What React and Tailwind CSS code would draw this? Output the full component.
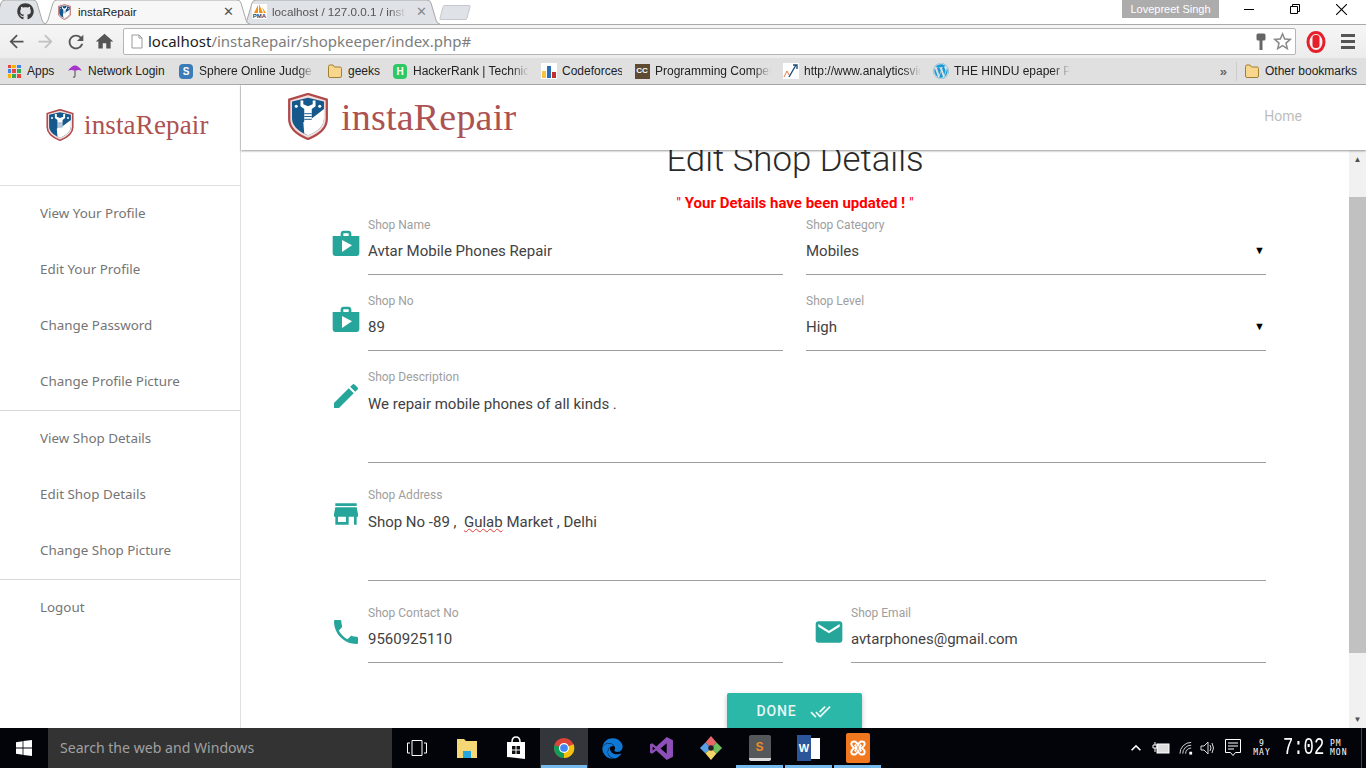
import { FaGithub, FaWordpress, FaEdge } from 'react-icons/fa';
import { MdShop, MdEdit, MdStore, MdPhone, MdEmail, MdDoneAll, MdArrowBack, MdArrowForward, MdRefresh, MdHome, MdStarBorder, MdKeyboardArrowUp } from 'react-icons/md';

const uiFont = "font-['Liberation_Sans',sans-serif]";

function Shield({ className }) {
  return (
    <svg viewBox="0 0 42 50" className={className}>
      <path d="M21 1 L41 7 L41 28 C41 38 31 45 21 49 C11 45 1 38 1 28 L1 7 Z" fill="#f3dcdc" stroke="#b04a4a" strokeWidth="2.4" />
      <path d="M21 5 L38 9 L38 27 C38 36 29 42 21 45 C13 42 4 36 4 27 L4 9 Z" fill="#14588c" />
      <path d="M17 43 L16 31 L25 27 L38 17 L38 27 C38 36 29 42 21 45 Z" fill="#fff" />
      <path d="M13 8 L13 14 L17 17 L17 33 L25 33 L25 17 L29 14 L29 8 L26 8 L26 12 L21 14 L16 12 L16 8 Z" fill="#fff" />
      <path d="M17 22 H25 M17 25 H25 M17 28 H25" stroke="#14588c" strokeWidth="1" />
      <circle cx="8.5" cy="14" r="1.6" fill="#fff" />
      <circle cx="33.5" cy="14" r="1.6" fill="#fff" />
    </svg>
  );
}

function Logo({ shield, text, gap }) {
  return (
    <div className={`flex items-center ${gap}`}>
      <Shield className={shield} />
      <span className={`font-['Liberation_Serif',serif] text-[#ac5252] ${text}`}>instaRepair</span>
    </div>
  );
}

function Tab({ w, className, active, children }) {
  return (
    <div className={`relative flex items-center h-[25px] shrink-0 ${className} ${active ? 'z-10' : ''}`}>
      <svg viewBox={`0 0 ${w} 25`} className="absolute inset-0 w-full h-full">
        <path
          d={`M0 25 Q3 25 4 21 L9 4 Q10 1 13 1 L${w - 13} 1 Q${w - 10} 1 ${w - 9} 4 L${w - 4} 21 Q${w - 3} 25 ${w} 25`}
          fill={active ? '#f7f7f7' : '#dfe2e7'}
          stroke="#a8a8a8"
          strokeWidth="1"
        />
      </svg>
      <div className="relative flex items-center w-full">{children}</div>
    </div>
  );
}

function Bookmark({ icon, label, width, fade }) {
  return (
    <div className="flex items-center gap-[5px] shrink-0">
      <span className="w-4 h-4 flex items-center justify-center shrink-0">{icon}</span>
      <span
        className={`whitespace-nowrap overflow-hidden text-[12px] text-[#222] ${width} ${fade ? '[mask-image:linear-gradient(to_right,black_85%,transparent)]' : ''}`}
      >
        {label}
      </span>
    </div>
  );
}

function FolderIcon({ className = 'w-4 h-4' }) {
  return (
    <svg viewBox="0 0 16 16" className={className}>
      <path d="M1.5 3.5 Q1.5 2 3 2 H6 L7.5 4 H13 Q14.5 4 14.5 5.5 V13 Q14.5 14.5 13 14.5 H3 Q1.5 14.5 1.5 13 Z" fill="#f8d78d" stroke="#a47f33" strokeWidth="1" />
    </svg>
  );
}

function AppsIcon() {
  const colours = ['#e8453c', '#f4b400', '#3f84f1', '#3f84f1', '#e8453c', '#34a853', '#f4b400', '#34a853', '#e8453c'];
  return (
    <span className="grid grid-cols-3 gap-[1px] w-[13px] h-[13px]">
      {colours.map((c, i) => (
        <span key={i} style={{ backgroundColor: c }} />
      ))}
    </span>
  );
}

function Toolbar() {
  return (
    <div className="flex items-center h-[33px] bg-[linear-gradient(#f6f6f6,#ececec)] pl-[6px]">
      <MdArrowBack className="w-[21px] h-[21px] text-[#555] mr-[8px]" />
      <MdArrowForward className="w-[21px] h-[21px] text-[#c0c0c0] mr-[9px]" />
      <MdRefresh className="w-[22px] h-[22px] text-[#555] mr-[7px]" />
      <MdHome className="w-[21px] h-[21px] text-[#555] mr-[8px]" />
      <div className="flex items-center h-[27px] w-[1173px] bg-white border border-[#b5b5b5] rounded-[2px]">
        <svg viewBox="0 0 12 15" className="w-[12px] h-[15px] ml-[7px] mr-[5px]">
          <path d="M1 1 H8 L11 4 V14 H1 Z" fill="#fff" stroke="#9a9a9a" strokeWidth="1" />
          <path d="M8 1 V4 H11" fill="none" stroke="#9a9a9a" strokeWidth="1" />
        </svg>
        <span className="text-[15px] font-['Noto_Sans',sans-serif] whitespace-nowrap">
          <span className="text-[#222]">localhost</span>
          <span className="text-[#7d7d7d]">/instaRepair/shopkeeper/index.php#</span>
        </span>
        <div className="ml-auto flex items-center pr-[1px]">
          <svg viewBox="0 0 10 18" className="w-[10px] h-[18px] mr-[5px]">
            <rect x="0.5" y="0.5" width="9" height="7" rx="1.5" fill="#666" />
            <rect x="3.5" y="7" width="3" height="10" fill="#666" />
          </svg>
          <MdStarBorder className="w-[23px] h-[23px] text-[#8a8a8a]" />
        </div>
      </div>
      <div className="flex items-center ml-[10px]">
        <svg viewBox="0 0 20 22" className="w-[20px] h-[22px]">
          <ellipse cx="10" cy="11" rx="8" ry="9.5" fill="none" stroke="#e5202a" strokeWidth="3" />
          <rect x="6.5" y="4" width="7" height="13" rx="3" fill="#e5202a" />
        </svg>
        <div className="flex flex-col gap-[3px] ml-[15px]">
          <span className="w-[14px] h-[3px] bg-[#555]" />
          <span className="w-[14px] h-[3px] bg-[#555]" />
          <span className="w-[14px] h-[3px] bg-[#555]" />
        </div>
      </div>
    </div>
  );
}

function BrowserChrome() {
  return (
    <div className={`h-[85px] shrink-0 flex flex-col ${uiFont}`}>
      <div className="flex items-end h-[25px] bg-white border-b border-[#aaa]">
        <Tab w={54} className="w-[54px] -ml-[8px]">
          <FaGithub className="w-[17px] h-[17px] text-[#3a3a3a] ml-[25px]" />
        </Tab>
        <Tab w={206} className="w-[206px] -ml-[2px]" active>
          <Shield className="w-[13px] h-[16px] ml-[14px] mr-[7px]" />
          <span className="text-[11.6px] text-[#222]">instaRepair</span>
          <span className="ml-auto mr-[16px] text-[13px] text-[#555]">✕</span>
        </Tab>
        <Tab w={197} className="w-[197px] -ml-[7px]">
          <span className="ml-[9px] mr-[5px] flex flex-col items-center w-[15px] bg-white leading-none">
            <svg viewBox="0 0 15 9" className="w-[15px] h-[9px]">
              <path d="M2 9 L6 1 L6 9 Z M7 9 L7 0 L11 9 Z M12 9 L10 3 L14 9 Z" fill="#f29111" />
            </svg>
            <span className="text-[6px] font-bold text-[#34406b]">PMA</span>
          </span>
          <span className="text-[11.7px] text-[#555] whitespace-nowrap overflow-hidden w-[134px] [mask-image:linear-gradient(to_right,black_88%,transparent)]">localhost / 127.0.0.1 / instaRepair</span>
          <span className="ml-auto mr-[13px] text-[13px] text-[#888]">✕</span>
        </Tab>
        <div className="w-[28px] h-[15px] ml-[1px] mb-[4px] bg-[#dfe2e7] border border-[#c4c7cc] rounded-[2px] -skew-x-[15deg]" />
        <div className="ml-auto flex items-start self-start h-[24px] pr-[2px]">
          <div className="w-[97px] h-[18px] bg-[#acacac] text-white text-[11px] flex items-center justify-center">Lovepreet Singh</div>
          <div className="flex items-center justify-center w-[46px] h-[18px] ml-[7px]"><span className="w-[10px] h-px bg-black" /></div>
          <div className="flex items-center justify-center w-[46px] h-[18px]">
            <svg viewBox="0 0 10 10" className="w-[10px] h-[10px]"><path d="M0.5 2.5 H7.5 V9.5 H0.5 Z M2.5 2.5 V0.5 H9.5 V7.5 H7.5" fill="none" stroke="#000" /></svg>
          </div>
          <div className="flex items-center justify-center w-[46px] h-[18px]">
            <svg viewBox="0 0 10 10" className="w-[11px] h-[11px]"><path d="M0 0 L10 10 M10 0 L0 10" stroke="#000" /></svg>
          </div>
        </div>
      </div>
      <Toolbar />
      <div className="flex items-center h-[27px] pl-[6px] gap-[12px] bg-[#e0e0e0] border-b border-[#aaa]">
        <Bookmark icon={<AppsIcon />} label="Apps" width="w-[28px]" />
        <Bookmark
          icon={
            <svg viewBox="0 0 16 16" className="w-4 h-4">
              <path d="M1 8 Q8 -3 15 8 Q12 6 8 8 Q4 6 1 8 Z" fill="#a435c9" />
              <path d="M8 8 V13 Q8 15 6 14" fill="none" stroke="#444" />
            </svg>
          }
          label="Network Login"
          width="w-[78px]"
        />
        <Bookmark
          icon={
            <span className="w-[14px] h-[15px] rounded-[4px] bg-[#3a7cb8] text-white text-[10px] font-bold flex items-center justify-center">S</span>
          }
          label="Sphere Online Judge (SPOJ)"
          width="w-[116px]"
          fade
        />
        <Bookmark icon={<FolderIcon />} label="geeks" width="w-[32px]" />
        <Bookmark
          icon={
            <span className="w-[14px] h-[15px] rounded-[4px] bg-[#2ec866] text-white text-[10px] font-bold flex items-center justify-center">H</span>
          }
          label="HackerRank | Technical"
          width="w-[116px]"
          fade
        />
        <Bookmark
          icon={
            <svg viewBox="0 0 16 16" className="w-4 h-4">
              <rect width="16" height="16" fill="#fff" />
              <rect x="1" y="8" width="4" height="7" fill="#f6c344" />
              <rect x="6" y="3" width="4" height="12" fill="#2a6eb5" />
              <rect x="11" y="9" width="4" height="6" fill="#c22d2d" />
            </svg>
          }
          label="Codeforces"
          width="w-[60px]"
        />
        <Bookmark
          icon={
            <span className="w-[15px] h-[15px] bg-[#5f4b32] text-white text-[8px] font-bold flex items-center justify-center">CC</span>
          }
          label="Programming Competition"
          width="w-[116px]"
          fade
        />
        <Bookmark
          icon={
            <svg viewBox="0 0 16 16" className="w-4 h-4">
              <rect width="16" height="16" fill="#fff" />
              <path d="M1 14 L4 8 L6 12" fill="none" stroke="#e67a4a" />
              <path d="M6 14 L13 2 M10 2 H14 V6" fill="none" stroke="#1f4e79" strokeWidth="1.4" />
            </svg>
          }
          label="http://www.analyticsvidhya"
          width="w-[117px]"
          fade
        />
        <Bookmark icon={<FaWordpress className="w-4 h-4 text-[#1a9bd7]" />} label="THE HINDU epaper PDF" width="w-[116px]" fade />
        <span className="ml-auto text-[13px] text-[#666] font-bold leading-none">»</span>
        <span className="w-px h-[19px] bg-[#ccc] -ml-[3px]" />
        <div className="pr-[8px] -ml-[5px]">
          <Bookmark icon={<FolderIcon />} label="Other bookmarks" width="w-[93px]" />
        </div>
      </div>
    </div>
  );
}

const sideGroups = [
  ['View Your Profile', 'Edit Your Profile', 'Change Password', 'Change Profile Picture'],
  ['View Shop Details', 'Edit Shop Details', 'Change Shop Picture'],
  ['Logout'],
];

function Sidebar() {
  return (
    <aside className="w-[241px] shrink-0 bg-white border-r border-[#e0e0e0] overflow-hidden">
      <div className="h-[101px] border-b border-[#e0e0e0] pl-[45px] pt-[24px]">
        <Logo shield="w-[30px] h-[32px]" text="text-[27px] tracking-[0.15px] leading-[32px]" gap="gap-[9px]" />
      </div>
      {sideGroups.map((group, i) => (
        <div key={i} className={i < 2 ? 'border-b border-[#d9d9d9]' : ''}>
          {group.map((item) => (
            <div key={item} className="h-[56px] flex items-center pl-[40px] pb-[2px] text-[13.4px] text-[#757575]">
              {item}
            </div>
          ))}
        </div>
      ))}
    </aside>
  );
}

function Field({ label, value, height = 'h-[57px]', width, spell }) {
  return (
    <div className={`flex flex-col border-b border-[#9e9e9e] ${height} ${width}`}>
      <span className="text-[12px] leading-[14px] text-[#9e9e9e]">{label}</span>
      <div className="text-[15px] leading-[20px] text-[#424242] mt-[9px]">{spell ?? value}</div>
    </div>
  );
}

function SelectField({ label, value, width }) {
  return (
    <div className={`flex flex-col border-b border-[#9e9e9e] h-[57px] ${width}`}>
      <span className="text-[12px] leading-[14px] text-[#9e9e9e]">{label}</span>
      <div className="flex items-center justify-between text-[15px] leading-[20px] text-[#424242] mt-[9px]">
        {value}
        <span className="text-[11px] text-black pr-[1px]">▼</span>
      </div>
    </div>
  );
}

function PrefixIcon({ Icon }) {
  return (
    <div className="w-[38px] shrink-0 pt-[10px]">
      <Icon className="w-8 h-8 text-[#26a69a]" />
    </div>
  );
}

function EditForm() {
  return (
    <div className="flex-1 min-w-0 overflow-hidden bg-white font-['Roboto',sans-serif]">
      <h1 className="text-center text-[34.8px] font-light leading-[40px] text-[#292929] -mt-[11px]">Edit Shop Details</h1>
      <p className="text-center text-[15px] leading-[18px] text-[#ff0000] mt-[15px] whitespace-pre">
        {'" '}
        <span className="font-bold">Your Details have been updated !</span>
        {' "'}
      </p>
      <div className="pl-[89px] mt-[6px]">
        <div className="flex mb-[19px]">
          <PrefixIcon Icon={MdShop} />
          <Field label="Shop Name" value="Avtar Mobile Phones Repair" width="w-[415px]" />
          <div className="ml-[23px]">
            <SelectField label="Shop Category" value="Mobiles" width="w-[460px]" />
          </div>
        </div>
        <div className="flex mb-[19px]">
          <PrefixIcon Icon={MdShop} />
          <Field label="Shop No" value="89" width="w-[415px]" />
          <div className="ml-[23px]">
            <SelectField label="Shop Level" value="High" width="w-[460px]" />
          </div>
        </div>
        <div className="flex mb-[25px]">
          <PrefixIcon Icon={MdEdit} />
          <div className="[&>div>div]:mt-[10px]">
            <Field label="Shop Description" value="We repair mobile phones of all kinds ." width="w-[898px]" height="h-[93px]" />
          </div>
        </div>
        <div className="flex mb-[25px]">
          <PrefixIcon Icon={MdStore} />
          <div className="[&>div>div]:mt-[10px]">
            <Field
              label="Shop Address"
              width="w-[898px]"
              height="h-[93px]"
              spell={
                <span className="whitespace-pre">
                  {'Shop No -89 ,  '}
                  <span className="underline decoration-wavy decoration-[#e53935] decoration-1">Gulab</span>
                  {' Market , Delhi'}
                </span>
              }
            />
          </div>
        </div>
        <div className="flex">
          <PrefixIcon Icon={MdPhone} />
          <Field label="Shop Contact No" value="9560925110" width="w-[415px]" />
          <div className="ml-[30px] flex">
            <PrefixIcon Icon={MdEmail} />
            <Field label="Shop Email" value="avtarphones@gmail.com" width="w-[415px]" />
          </div>
        </div>
      </div>
      <div className="flex justify-center mt-[30px] pr-[2px]">
        <button className="flex items-center justify-center gap-[14px] w-[135px] h-[36px] bg-[#2bb8a8] text-[#e8f7f5] text-[14px] font-medium tracking-[0.8px] rounded-[2px] shadow-[0_2px_5px_rgba(0,0,0,0.25)]">
          DONE
          <MdDoneAll className="w-[21px] h-[21px]" />
        </button>
      </div>
    </div>
  );
}

function Scrollbar() {
  return (
    <div className="w-[17px] shrink-0 flex flex-col bg-[#f1f1f1]">
      <div className="h-[15px] mt-[2px] flex items-center justify-center text-[8px] text-[#505050]">▲</div>
      <div className="h-[456px] mt-[30px] bg-[#c1c1c1]" />
      <div className="mt-auto h-[17px] flex items-center justify-center text-[8px] text-[#505050]">▼</div>
    </div>
  );
}

function TaskTile({ children, width = 'w-[49px]', active, running }) {
  return (
    <div className={`relative h-[40px] flex items-center justify-center shrink-0 ${width} ${active ? 'bg-[#33373c]' : ''}`}>
      {children}
      {running && <span className="absolute left-0 right-0 bottom-0 h-[3px] mx-[1px] bg-[#76b9ed]" />}
    </div>
  );
}

function Taskbar() {
  return (
    <div className="h-[40px] shrink-0 flex items-center bg-[#02040a] text-white font-['Liberation_Sans',sans-serif]">
      <div className="w-[48px] flex justify-center">
        <svg viewBox="0 0 16 16" className="w-4 h-4">
          <path d="M0 2.2 L6.6 1.2 V7.6 H0 Z M7.4 1.1 L16 0 V7.6 H7.4 Z M0 8.4 H6.6 V14.8 L0 13.8 Z M7.4 8.4 H16 V16 L7.4 14.9 Z" fill="#fff" />
        </svg>
      </div>
      <div className="w-[344px] h-[40px] bg-[#333] flex items-center pl-[12px] text-[14.1px] text-[#a0a0a0] font-['Noto_Sans',sans-serif]">
        Search the web and Windows
      </div>
      <TaskTile width="w-[50px]">
        <svg viewBox="0 0 20 16" className="w-[20px] h-[16px]">
          <path d="M5 .5 H15 V15.5 H5 Z M3 3 H.5 V13 H3 M17 3 H19.5 V13 H17" fill="none" stroke="#fff" />
        </svg>
      </TaskTile>
      <TaskTile>
        <svg viewBox="0 0 22 22" className="w-[22px] h-[22px]">
          <path d="M1 2 H8 L10 4 H21 V21 H1 Z" fill="#f6d776" />
          <rect x="7" y="14" width="8" height="7" fill="#27a6e0" />
        </svg>
      </TaskTile>
      <TaskTile>
        <svg viewBox="0 0 20 24" className="w-[20px] h-[24px]">
          <path d="M1 6 H19 V23 L1 21 Z" fill="#fff" />
          <path d="M6 6 Q6 1 10 1 Q14 1 14 6" fill="none" stroke="#fff" strokeWidth="1.5" />
          <path d="M6 10 H9.5 V13.5 H6 Z M10.5 10 H14 V13.5 H10.5 Z M6 14.5 H9.5 V18 H6 Z M10.5 14.5 H14 V18 H10.5 Z" fill="#111" />
        </svg>
      </TaskTile>
      <TaskTile active running width="w-[48px]">
        <svg viewBox="0 0 24 24" className="w-[22px] h-[22px]">
          <circle cx="12" cy="12" r="11" fill="#db4437" />
          <path d="M12 12 L1.5 9 A11 11 0 0 0 12 23 Z" fill="#0f9d58" />
          <path d="M12 12 L12 23 A11 11 0 0 0 22.5 8 Z" fill="#f4c20d" />
          <circle cx="12" cy="12" r="5.5" fill="#fff" />
          <circle cx="12" cy="12" r="4.2" fill="#4285f4" />
        </svg>
      </TaskTile>
      <TaskTile>
        <FaEdge className="w-[21px] h-[21px] text-[#0f78d4]" />
      </TaskTile>
      <TaskTile>
        <svg viewBox="0 0 24 24" className="w-[25px] h-[25px]">
          <path d="M17 1 L23 4 V20 L17 23 L7 14 L3 17 L1 16 V8 L3 7 L7 10 Z M17 7 L11 12 L17 17 Z M3.5 10 V14 L6 12 Z" fill="#8e50b8" />
        </svg>
      </TaskTile>
      <TaskTile>
        <svg viewBox="0 0 26 30" className="w-[24px] h-[28px]">
          <path d="M13 15 L7 9 L13 2 L19 9 Z" fill="#e8686a" />
          <path d="M13 15 L7 9 L1 15 L7 21 Z" fill="#5aa2e8" />
          <path d="M13 15 L19 9 L25 15 L19 21 Z" fill="#6fbf5e" />
          <path d="M13 15 L7 21 L13 28 L19 21 Z" fill="#f2d66a" />
          <circle cx="13" cy="15" r="3" fill="#222" />
        </svg>
      </TaskTile>
      <TaskTile running>
        <div className="w-[22px] h-[26px] rounded-[2px] bg-[#55585a] border-b-[3px] border-[#ddd] text-[#f08a24] text-[12px] font-bold flex items-center justify-center">S</div>
      </TaskTile>
      <TaskTile running>
        <div className="flex items-center">
          <div className="w-[14px] h-[26px] bg-[#2b579a] text-white text-[11px] font-bold flex items-center justify-center">W</div>
          <div className="w-[9px] h-[21px] bg-white" />
        </div>
      </TaskTile>
      <TaskTile running>
        <div className="w-[24px] h-[30px] rounded-[2px] bg-[#f1781f] flex items-center justify-center">
          <svg viewBox="0 0 18 18" className="w-[18px] h-[18px]">
            <path d="M3 3 Q7 1 9 6 Q11 1 15 3 Q17 6 13 9 Q17 12 15 15 Q11 17 9 12 Q7 17 3 15 Q1 12 5 9 Q1 6 3 3 Z M6 5.5 L7.5 9 L6 12.5 M12 5.5 L10.5 9 L12 12.5" fill="none" stroke="#fff" strokeWidth="2" />
          </svg>
        </div>
      </TaskTile>
      <div className="ml-auto flex items-center h-[40px] pr-[4px]">
        <MdKeyboardArrowUp className="w-[20px] h-[20px] mr-[6px]" />
        <svg viewBox="0 0 18 14" className="w-[18px] h-[14px] mr-[9px]">
          <rect x="5" y="3" width="12" height="9" fill="#ddd" stroke="#fff" />
          <path d="M3 1 V4 M1 4 H5 V7 H1 Z M3 7 V11" stroke="#fff" fill="none" />
        </svg>
        <svg viewBox="0 0 16 14" className="w-[15px] h-[14px] mr-[6px]">
          <path d="M1 13 A12 12 0 0 1 13 1 M4 13 A9 9 0 0 1 13 4 M7 13 A6 6 0 0 1 13 7" fill="none" stroke="#ddd" />
          <rect x="11" y="11" width="3" height="3" fill="#fff" />
        </svg>
        <svg viewBox="0 0 16 16" className="w-[16px] h-[16px] mr-[9px]">
          <path d="M1 6 H4 L8 2 V14 L4 10 H1 Z M10 5 Q12 8 10 11 M12 3 Q15 8 12 13" fill="none" stroke="#ddd" />
        </svg>
        <svg viewBox="0 0 16 18" className="w-[16px] h-[18px] mr-[11px]">
          <path d="M.5 .5 H15.5 V13.5 H10.5 L8 16.5 L5.5 13.5 H.5 Z M3 4 H13 M3 7 H13 M3 10 H9" fill="none" stroke="#fff" />
        </svg>
        <div className="flex flex-col items-center w-[20px] text-[8px] leading-[9px] tracking-[1px] font-['DejaVu_Sans_Mono',monospace] mr-[11px]">
          <span>9</span>
          <span>MAY</span>
        </div>
        <div className="w-[41px] flex justify-center">
          <span className="font-['Liberation_Mono',monospace] text-[23px] leading-none scale-x-[0.75]">7:02</span>
        </div>
        <div className="flex flex-col w-[20px] ml-[6px] text-[8px] leading-[9px] tracking-[1px] font-['DejaVu_Sans_Mono',monospace]">
          <span>PM</span>
          <span>MON</span>
        </div>
        <span className="w-px h-[40px] bg-[#444] ml-[11px]" />
      </div>
    </div>
  );
}

export default function App() {
  return (
    <div className="w-[1366px] h-[768px] flex flex-col overflow-hidden bg-white">
      <BrowserChrome />
      <div className="flex flex-1 min-h-0">
        <Sidebar />
        <div className="flex flex-1 min-w-0 flex-col font-['Roboto',sans-serif]">
          <div className="relative z-10 h-[65px] shrink-0 flex items-center justify-between bg-white shadow-[0_1px_2px_rgba(0,0,0,0.4)] pl-[46px] pr-[64px]">
            <Logo shield="w-[42px] h-[47px] -mt-[2px]" text="text-[38px] tracking-[0.2px] leading-[44px] -mt-[2px]" gap="gap-[12px]" />
            <span className="text-[14px] text-[#bdbdbd] -mt-[3px]">Home</span>
          </div>
          <div className="flex flex-1 min-h-0">
            <EditForm />
            <Scrollbar />
          </div>
        </div>
      </div>
      <Taskbar />
    </div>
  );
}
